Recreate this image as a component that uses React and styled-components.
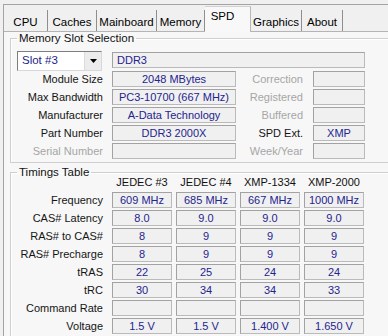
import React from "react";
import styled, { createGlobalStyle } from "styled-components";

const GlobalStyle = createGlobalStyle`
  html, body {
    margin: 0;
    padding: 0;
    background: #f0f0f0;
    overflow: hidden;
    font-family: "Liberation Sans", Arial, sans-serif;
    font-size: 11px;
    color: #151515;
  }
`;

const Window = styled.div`
  margin: 4px 0 0 3px;
  width: 440px;
  border-top: 1px solid #a4a4a4;
  border-left: 1px solid #a4a4a4;
`;

const TabStrip = styled.div`
  display: flex;
  align-items: flex-end;
  height: 26px;
`;

const Tab = styled.div`
  box-sizing: border-box;
  width: ${p => p.w}px;
  height: ${p => (p.active ? 26 : 21)}px;
  display: flex;
  align-items: center;
  justify-content: center;
  font-size: 11.5px;
  color: #000;
  background: ${p => (p.active ? "#f8f8f8" : "#f0f0f0")};
  border-right: 1px solid ${p => (p.active ? "#b8b8b8" : "#8e8e8e")};
  border-top: ${p => (p.active ? "1px solid #d0d0d0" : "none")};
  padding: ${p => (p.active ? "0 10px 7px 0" : "2px 0 0 0")};
  margin-bottom: ${p => (p.active ? "-1px" : "0")};
  position: relative;
  z-index: ${p => (p.active ? 1 : 0)};
`;

const Panel = styled.div`
  background: #f7f7f7;
  border-top: 1px solid #b4b4b4;
  padding: 0 0 10px 6px;
`;

const Group = styled.fieldset`
  margin: ${p => p.top || 0}px 0 0 0;
  padding: ${p => p.pt || 4}px 0 3px 0;
  width: 420px;
  border: 1px solid #cfcfcf;
  box-shadow: inset 1px 1px 0 #ffffff;
`;

const Legend = styled.legend`
  margin-left: 6px;
  padding: 0 2px;
  line-height: 13px;
  font-size: 11.5px;
  color: #111;
`;

const SlotGrid = styled.div`
  display: grid;
  grid-template-columns: 101px 124px 77px 52px;
  grid-template-rows: 18px;
  grid-auto-rows: 16px;
  row-gap: 2px;
`;

const TopRow = styled.div`
  grid-column: 1 / -1;
  display: grid;
  grid-template-columns: 101px 253px;
  align-items: start;
`;

const Combo = styled.div`
  box-sizing: border-box;
  margin-left: 6px;
  width: 85px;
  height: 20px;
  display: flex;
  align-items: stretch;
  background: #fff;
  border: 1px solid #7e7e7e;
  border-right-color: #d8d8d8;
  border-bottom-color: #d8d8d8;
`;

const ComboText = styled.span`
  flex: 1;
  padding-left: 4px;
  line-height: 17px;
  color: #1c1c8a;
  font-size: 11.5px;
`;

const ComboButton = styled.span`
  width: 16px;
  display: flex;
  align-items: center;
  justify-content: center;
  background: #ececec;
  border-left: 1px solid #dcdcdc;
`;

const Label = styled.div`
  text-align: right;
  padding-right: ${p => p.pad || 9}px;
  line-height: 16px;
  white-space: nowrap;
  color: ${p => (p.off ? "#a6a6a6" : "#141414")};
`;

const Field = styled.div`
  box-sizing: border-box;
  height: 16px;
  line-height: 14px;
  background: #f0f0f0;
  border: 1px solid #bababa;
  border-top-color: #a2a2a2;
  border-left-color: #a2a2a2;
  color: #24248e;
  text-align: ${p => (p.left ? "left" : "center")};
  padding-left: ${p => (p.left ? "4px" : "0")};
  white-space: nowrap;
  overflow: hidden;
  margin-top: ${p => p.mt || 0}px;
`;

const TimingGrid = styled.div`
  display: grid;
  grid-template-columns: 97px repeat(4, 60px);
  column-gap: 4px;
  grid-template-rows: 15px;
  grid-auto-rows: 16px;
  row-gap: 2px;
  margin-top: -8px;
`;

const Head = styled.div`
  text-align: center;
  line-height: 15px;
  color: #111;
`;

const TLabel = styled.div`
  text-align: right;
  padding-right: 5px;
  line-height: 16px;
  white-space: nowrap;
`;

const slotRows = [
  ["Module Size", "2048 MBytes", "Correction", "", true],
  ["Max Bandwidth", "PC3-10700 (667 MHz)", "Registered", "", true],
  ["Manufacturer", "A-Data Technology", "Buffered", "", true],
  ["Part Number", "DDR3 2000X", "SPD Ext.", "XMP", false],
  ["Serial Number", "", "Week/Year", "", true]
];

const timings = [
  ["Frequency", ["609 MHz", "685 MHz", "667 MHz", "1000 MHz"]],
  ["CAS# Latency", ["8.0", "9.0", "9.0", "9.0"]],
  ["RAS# to CAS#", ["8", "9", "9", "9"]],
  ["RAS# Precharge", ["8", "9", "9", "9"]],
  ["tRAS", ["22", "25", "24", "24"]],
  ["tRC", ["30", "34", "34", "33"]],
  ["Command Rate", ["", "", "", ""]],
  ["Voltage", ["1.5 V", "1.5 V", "1.400 V", "1.650 V"]]
];

const tabs = [
  ["CPU", 44],
  ["Caches", 49],
  ["Mainboard", 60],
  ["Memory", 48],
  ["SPD", 46],
  ["Graphics", 51],
  ["About", 41]
];

export default function App() {
  return (
    <>
      <GlobalStyle />
      <Window>
        <TabStrip>
          {tabs.map(([name, w]) => (
            <Tab key={name} w={w} active={name === "SPD"}>
              {name}
            </Tab>
          ))}
        </TabStrip>
        <Panel>
          <Group pt={6}>
            <Legend>Memory Slot Selection</Legend>
            <SlotGrid>
              <TopRow>
                <Combo>
                  <ComboText>Slot #3</ComboText>
                  <ComboButton>
                    <svg width="7" height="4" viewBox="0 0 7 4">
                      <path d="M0 0h7L3.5 4z" fill="#000" />
                    </svg>
                  </ComboButton>
                </Combo>
                <Field left mt={1}>DDR3</Field>
              </TopRow>
              {slotRows.map(([l, v, l2, v2, off]) => (
                <React.Fragment key={l}>
                  <Label off={l === "Serial Number"}>{l}</Label>
                  <Field>{v}</Field>
                  <Label off={off} pad={10}>{l2}</Label>
                  <Field>{v2}</Field>
                </React.Fragment>
              ))}
            </SlotGrid>
          </Group>
          <Group top={3}>
            <Legend>Timings Table</Legend>
            <TimingGrid>
              <span />
              <Head>JEDEC #3</Head>
              <Head>JEDEC #4</Head>
              <Head>XMP-1334</Head>
              <Head>XMP-2000</Head>
              {timings.map(([l, vals]) => (
                <React.Fragment key={l}>
                  <TLabel>{l}</TLabel>
                  {vals.map((v, i) => (
                    <Field key={i}>{v}</Field>
                  ))}
                </React.Fragment>
              ))}
            </TimingGrid>
          </Group>
        </Panel>
      </Window>
    </>
  );
}
